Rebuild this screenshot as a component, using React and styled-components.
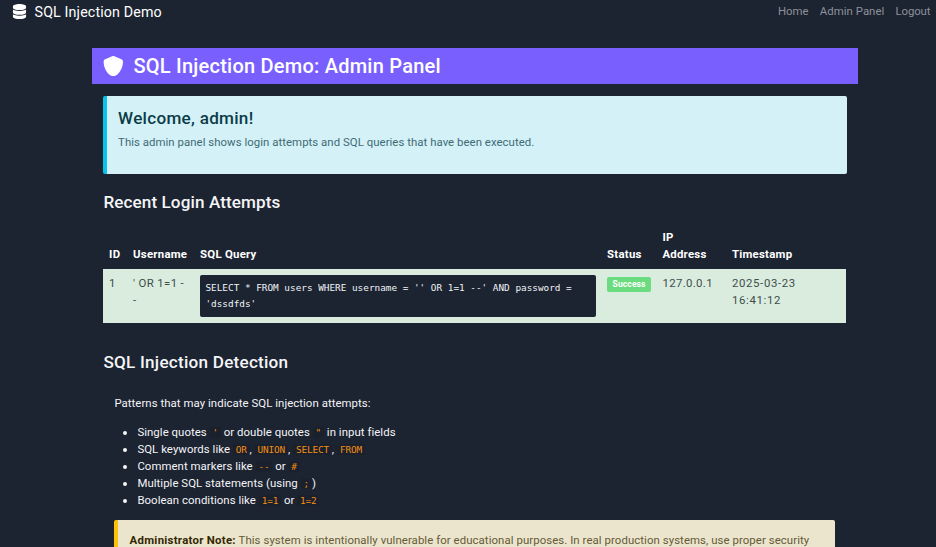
import React from 'react';
import styled, { createGlobalStyle } from 'styled-components';
import { FaDatabase, FaShield } from 'react-icons/fa6';

const sans = `Roboto, "Noto Sans", sans-serif`;
const mono = `"DejaVu Sans Mono", "Liberation Mono", monospace`;

const GlobalStyle = createGlobalStyle`
  * { box-sizing: border-box; }
  body {
    margin: 0;
    background: #1c2331;
    color: #f4f5f7;
    font: 400 11.4px/17.1px ${sans};
    letter-spacing: 0.05px;
  }
`;

const Page = styled.div`
  height: 100vh;
  overflow: hidden;
`;

const Tracked = styled.span`
  letter-spacing: ${(p) => p.$by}px;
`;

const Navbar = styled.nav`
  display: flex;
  justify-content: space-between;
  height: 48.4px;
  padding: 0 5.7px 0 13px;
`;

const Brand = styled.a`
  display: flex;
  align-items: center;
  gap: 7.2px;
  height: 24px;
  color: #fff;
  font-size: 14.25px;
  line-height: 18px;
  letter-spacing: 0.13px;
  svg { display: block; margin: -1px 0 0 -0.6px; }
`;

const NavLinks = styled.div`
  display: flex;
  align-items: center;
  gap: 11.2px;
  height: 24px;
  color: #8e9199;
`;

const Main = styled.main`
  width: 766px;
  margin-left: 92px;
`;

const PageHeader = styled.header`
  display: flex;
  align-items: center;
  gap: 9.8px;
  height: 35.2px;
  margin-bottom: 12px;
  padding-left: 11.1px;
  background: #7a5fff;
  color: #fff;
`;

const PageTitle = styled.h1`
  margin: 0;
  font-size: 20px;
  font-weight: 500;
  line-height: 24px;
  letter-spacing: 0.23px;
`;

const Content = styled.div`
  padding: 0 11.4px;
`;

const Alert = styled.section`
  border-left: 4px solid ${(p) => p.$accent};
  border-radius: 2px;
  background: ${(p) => p.$background};
  color: ${(p) => p.$color};
`;

const WelcomeAlert = styled(Alert)`
  height: 78px;
  padding: 12px 10.7px;
`;

const WelcomeTitle = styled.h4`
  margin: 0 0 6.2px;
  color: #0b3c47;
  font-size: 17.1px;
  font-weight: 500;
  line-height: 20.5px;
  letter-spacing: 0.28px;
`;

const Paragraph = styled.p`
  margin: 0;
`;

const SectionTitle = styled.h3`
  margin: ${(p) => p.$top}px 0 0;
  font-size: 17.1px;
  font-weight: 500;
  line-height: 20.5px;
  letter-spacing: ${(p) => p.$tracking}px;
`;

const Table = styled.table`
  width: 743px;
  margin-top: 10.5px;
  table-layout: fixed;
  border-collapse: collapse;
`;

const HeadCell = styled.th`
  padding: 6.2px 5.7px 5.4px;
  color: #fff;
  font-weight: 700;
  letter-spacing: 0.25px;
  text-align: left;
  vertical-align: bottom;
`;

const BodyRow = styled.tr`
  height: 54.5px;
  background: #d9ecdd;
  color: #3f4c4d;
`;

const Cell = styled.td`
  padding: 6.3px 5.7px 5.7px;
  vertical-align: top;
  letter-spacing: ${(p) => p.$tracking || 0.35}px;
`;

const Query = styled.pre`
  height: 42px;
  margin: 0;
  padding: 5.4px;
  border-radius: 2px;
  background: #1c2331;
  color: #f1f4f8;
  font: 9.37px/15.4px ${mono};
  letter-spacing: 0;
  white-space: pre-wrap;
`;

const Badge = styled.span`
  display: block;
  width: 44px;
  height: 15px;
  margin-top: 2px;
  border-radius: 2px;
  background: #6bdb80;
  color: #fff;
  font-size: 8.55px;
  font-weight: 700;
  line-height: 15px;
  letter-spacing: 0.1px;
  text-align: center;
`;

const Detection = styled.div`
  padding: 22.4px 11.4px 0 11px;
`;

const PatternList = styled.ul`
  margin: 11.4px 0 11.2px;
  padding-left: 23px;
`;

const Code = styled.code`
  padding: 0 2.85px;
  border-radius: 2px;
  background: #1b202d;
  color: #f38f12;
  font: 9.4px ${mono};
  letter-spacing: -0.14px;
`;

const NoteAlert = styled(Alert)`
  height: 64px;
  padding: 11.4px 11.2px;
  letter-spacing: 0.07px;
  strong {
    color: #332701;
    letter-spacing: 0.28px;
  }
`;

const columns = [
  { label: 'ID', width: 24 },
  { label: 'Username', width: 67 },
  { label: 'SQL Query', width: 407 },
  { label: 'Status', width: 55.3 },
  { label: 'IP Address', lines: ['IP', 'Address'], width: 69.5 },
  { label: 'Timestamp', width: 120.2 },
];

export default function App() {
  return (
    <Page>
      <GlobalStyle />
      <Navbar>
        <Brand>
          <FaDatabase size={15} />
          SQL Injection Demo
        </Brand>
        <NavLinks>
          <Tracked $by={0}>Home</Tracked>
          <Tracked $by={0.03}>Admin Panel</Tracked>
          <Tracked $by={-0.12}>Logout</Tracked>
        </NavLinks>
      </Navbar>
      <Main>
        <PageHeader>
          <FaShield size={20.6} />
          <PageTitle>SQL Injection Demo: Admin Panel</PageTitle>
        </PageHeader>
        <Content>
          <WelcomeAlert $accent="#06c4ec" $background="#d4f1f7" $color="#3f6b76">
            <WelcomeTitle>Welcome, admin!</WelcomeTitle>
            <Paragraph>
              <Tracked $by={0.04}>
                This admin panel shows login attempts and SQL queries that have been executed.
              </Tracked>
            </Paragraph>
          </WelcomeAlert>

          <SectionTitle $top={18.4} $tracking={0.1}>Recent Login Attempts</SectionTitle>
          <Table>
            <colgroup>
              {columns.map((c) => (
                <col key={c.label} width={c.width} />
              ))}
            </colgroup>
            <thead>
              <tr>
                {columns.map((c) => (
                  <HeadCell key={c.label}>
                    {c.lines ? <>{c.lines[0]}<br />{c.lines[1]}</> : c.label}
                  </HeadCell>
                ))}
              </tr>
            </thead>
            <tbody>
              <BodyRow>
                <Cell>1</Cell>
                <Cell>' OR 1=1 -<br />-</Cell>
                <Cell>
                  <Query>SELECT * FROM users WHERE username = '' OR 1=1 --' AND password = 'dssdfds'</Query>
                </Cell>
                <Cell><Badge>Success</Badge></Cell>
                <Cell>127.0.0.1</Cell>
                <Cell $tracking={0.65}>2025-03-23 16:41:12</Cell>
              </BodyRow>
            </tbody>
          </Table>

          <SectionTitle $top={28.9} $tracking={0.25}>SQL Injection Detection</SectionTitle>
          <Detection>
            <Paragraph>Patterns that may indicate SQL injection attempts:</Paragraph>
            <PatternList>
              <li>Single quotes <Code>'</Code> or double quotes <Code>"</Code> in input fields</li>
              <li>
                SQL keywords like <Code>OR</Code>, <Code>UNION</Code>, <Code>SELECT</Code>, <Code>FROM</Code>
              </li>
              <li>Comment markers like <Code>--</Code> or <Code>#</Code></li>
              <li>Multiple SQL statements (using <Code>;</Code>)</li>
              <li>Boolean conditions like <Code>1=1</Code> or <Code>1=2</Code></li>
            </PatternList>
            <NoteAlert $accent="#ffc107" $background="#ebe5cd" $color="#665a36">
              <strong>Administrator Note:</strong> This system is intentionally vulnerable for educational
              purposes. In real production systems, use proper security
            </NoteAlert>
          </Detection>
        </Content>
      </Main>
    </Page>
  );
}
